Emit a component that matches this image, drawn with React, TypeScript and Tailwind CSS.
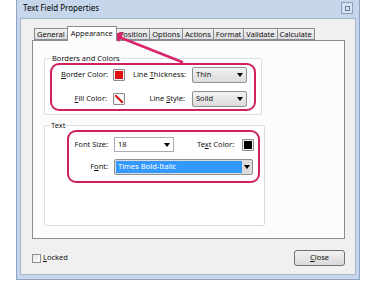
const tabs = ["General", "Appearance", "Position", "Options", "Actions", "Format", "Validate", "Calculate"];

const Arrow = () => (
	<svg className="absolute left-0 top-0 pointer-events-none" width="375" height="281">
		<line x1="182" y1="62" x2="119" y2="37" stroke="#d8246a" strokeWidth="2.5" strokeLinecap="round" />
		<polygon points="112,34 124,32 119,42" fill="#d8246a" />
	</svg>
);

const Caret = () => (
	<span className="w-0 h-0 border-l-[3px] border-r-[3px] border-t-[4px] border-l-transparent border-r-transparent border-t-black" />
);

const Select = ({ value }: { value: string }) => (
	<div className="w-[55px] h-[16px] flex items-center border border-[#8e8f8f] rounded-[2px] bg-gradient-to-b from-[#f2f2f2] to-[#dcdcdc] pl-[3px] pr-[3px]">
		<span className="flex-1">{value}</span>
		<Caret />
	</div>
);

const Swatch = ({ children }: { children: React.ReactNode }) => (
	<div className="w-[12px] h-[12px] border border-[#8a8a8a] bg-[#f4f4f4] p-[1px] rounded-[1px]">{children}</div>
);

export default function App() {
	return (
		<div className="relative w-[375px] h-[281px] bg-white overflow-hidden pl-[16px] font-['Noto_Sans',sans-serif] text-[7.5px] text-[#111] leading-none whitespace-nowrap">
			<div className="w-[344px] h-[280px] bg-[#c6d7ec] border border-[#8da3bf] border-t-0 flex flex-col px-[3px] pb-[4px]">
				{/* Title bar */}
				<div className="h-[18px] shrink-0 flex items-center justify-between pl-[3px] pr-[3px] pb-[2px]">
					<span className="text-[8px] text-black">Text Field Properties</span>
					<div className="w-[12px] h-[12px] border border-[#8a9fbb] bg-[#d6e2f1] flex items-center justify-center">
						<div className="w-[5px] h-[5px] border border-[#6d7f99]" />
					</div>
				</div>

				{/* Body */}
				<div className="flex-1 bg-[#f0f0f0] border border-[#a5b8cf] pl-[11px] pr-[10px] pt-[7px] flex flex-col">
					{/* Tabs */}
					<div className="flex items-end h-[14px] shrink-0 pl-[2px]">
						{tabs.map((t) =>
							t === "Appearance" ? (
								<div key={t} className="h-[15px] -mb-[1px] -ml-[1px] px-[3px] pt-[3px] bg-white border border-[#898c95] border-b-0 relative z-10">
									{t}
								</div>
							) : (
								<div key={t} className="h-[12px] px-[2px] pt-[2px] bg-gradient-to-b from-[#f2f2f2] to-[#dcdcdc] border border-[#898c95] -ml-[1px] first:ml-0">
									{t}
								</div>
							)
						)}
					</div>

					{/* Panel */}
					<div className="h-[199px] shrink-0 bg-[#fcfcfc] border border-[#898c95] px-[11px] pt-[14px]">
						<fieldset className="w-[218px] h-[60px] border border-[#d5dfe5] bg-white rounded-[2px] px-[5px] pb-[1px]">
							<legend className="px-[1px] ml-[1px]">Borders and Colors</legend>
							<div className="h-[48px] border-2 border-[#cf2060] rounded-[9px] flex flex-col justify-center gap-[8px] pl-[9px]">
								<div className="flex items-center">
									<span className="w-[46px] text-right"><u>B</u>order Color:</span>
									<div className="ml-[6px]"><Swatch><div className="w-full h-full bg-[#e01010]" /></Swatch></div>
									<span className="ml-[8px] w-[52px] text-right">Line <u>T</u>hickness:</span>
									<div className="ml-[7px]"><Select value="Thin" /></div>
								</div>
								<div className="flex items-center">
									<span className="w-[46px] text-right"><u>F</u>ill Color:</span>
									<div className="ml-[6px]">
										<Swatch>
											<svg width="8" height="8" viewBox="0 0 8 8" className="block">
												<rect width="8" height="8" fill="#fff" />
												<line x1="0" y1="0" x2="8" y2="8" stroke="#d01010" strokeWidth="2" />
											</svg>
										</Swatch>
									</div>
									<span className="ml-[8px] w-[52px] text-right">Line <u>S</u>tyle:</span>
									<div className="ml-[7px]"><Select value="Solid" /></div>
								</div>
							</div>
						</fieldset>

						<fieldset className="mt-[7px] w-[218px] h-[104px] border border-[#d5dfe5] bg-white rounded-[2px] pl-[22px] pr-[4px]">
							<legend className="px-[1px] -ml-[17px]">Text</legend>
							<div className="h-[53px] border-2 border-[#cf2060] rounded-[9px] flex flex-col justify-center gap-[7px] pl-[4px] pr-[4px]">
								<div className="flex items-center">
									<span className="w-[35px] text-right">Font Size:</span>
									<div className="ml-[6px] w-[60px] h-[15px] flex items-center border border-[#abadb3] bg-white pl-[3px] pr-[3px]">
										<span className="flex-1">18</span>
										<Caret />
									</div>
									<span className="ml-[23px]">Te<u>x</u>t Color:</span>
									<div className="ml-[8px]"><Swatch><div className="w-full h-full bg-black" /></Swatch></div>
								</div>
								<div className="flex items-center">
									<span className="w-[35px] text-right">F<u>o</u>nt:</span>
									<div className="ml-[6px] w-[139px] h-[16px] flex items-center border border-[#8e8f8f] rounded-[2px] bg-[#dcdcdc] p-[1px]">
										<span className="flex-1 h-full bg-[#3399ff] text-white flex items-center pl-[2px]">Times Bold-Italic</span>
										<span className="w-[9px] flex justify-center"><Caret /></span>
									</div>
								</div>
							</div>
						</fieldset>
					</div>

					{/* Footer */}
					<div className="flex items-center justify-between mt-[11px]">
						<div className="flex items-center gap-[2px]">
							<div className="w-[9px] h-[9px] border border-[#8f8f8f] bg-gradient-to-br from-[#e6e6e6] to-[#fbfbfb]" />
							<span><u>L</u>ocked</span>
						</div>
						<div className="w-[51px] h-[16px] border border-[#707070] rounded-[3px] bg-gradient-to-b from-[#f2f2f2] to-[#d9d9d9] flex items-center justify-center">
							<span><u>C</u>lose</span>
						</div>
					</div>
				</div>
			</div>
			<Arrow />
		</div>
	);
}
